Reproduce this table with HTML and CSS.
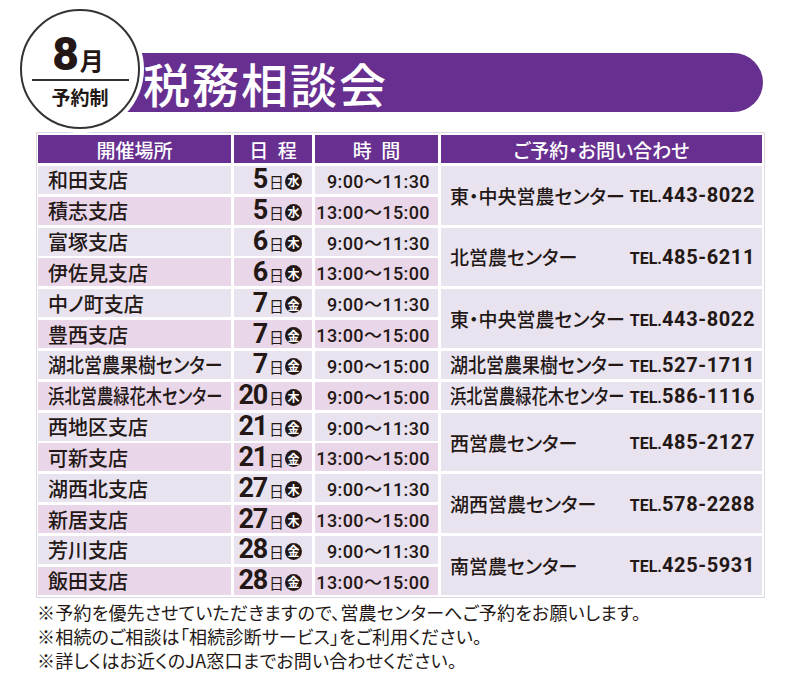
FILE: index.html
```html
<!DOCTYPE html>
<html lang="ja">
<head>
<meta charset="utf-8">
<title>税務相談会</title>
<link rel="stylesheet" href="styles.css">
</head>
<body>
<div class="page">
  <div class="title-row">
    <div class="title-bar"><h1>税務相談会</h1></div>
    <div class="badge">
      <div class="badge-month"><span class="num">8</span><span class="tsuki">月</span></div>
      <div class="badge-rule"></div>
      <div class="badge-sub">予約制</div>
    </div>
  </div>

  <div class="table-wrap">
    <div class="grid">
      <div class="th">開催場所</div>
      <div class="th">日&ensp;程</div>
      <div class="th">時&ensp;間</div>
      <div class="th">ご予約・お問い合わせ</div>

      <div class="c1 odd">和田支店</div>
      <div class="c2 odd"><span class="d">5</span><span class="nichi">日</span><span class="wd">水</span></div>
      <div class="c3 odd">9:00～11:30</div>
      <div class="c4 span2"><span class="cname">東・中央営農センター</span><span class="tel"><span class="tl">TEL.</span>443-8022</span></div>

      <div class="c1 even">積志支店</div>
      <div class="c2 even"><span class="d">5</span><span class="nichi">日</span><span class="wd">水</span></div>
      <div class="c3 even">13:00～15:00</div>

      <div class="c1 odd">富塚支店</div>
      <div class="c2 odd"><span class="d">6</span><span class="nichi">日</span><span class="wd">木</span></div>
      <div class="c3 odd">9:00～11:30</div>
      <div class="c4 span2"><span class="cname">北営農センター</span><span class="tel"><span class="tl">TEL.</span>485-6211</span></div>

      <div class="c1 even">伊佐見支店</div>
      <div class="c2 even"><span class="d">6</span><span class="nichi">日</span><span class="wd">木</span></div>
      <div class="c3 even">13:00～15:00</div>

      <div class="c1 odd">中ノ町支店</div>
      <div class="c2 odd"><span class="d">7</span><span class="nichi">日</span><span class="wd">金</span></div>
      <div class="c3 odd">9:00～11:30</div>
      <div class="c4 span2"><span class="cname">東・中央営農センター</span><span class="tel"><span class="tl">TEL.</span>443-8022</span></div>

      <div class="c1 even">豊西支店</div>
      <div class="c2 even"><span class="d">7</span><span class="nichi">日</span><span class="wd">金</span></div>
      <div class="c3 even">13:00～15:00</div>

      <div class="c1 odd"><span class="sq sq-10"><span class="sq-in sq-in-10">湖北営農果樹センター</span></span></div>
      <div class="c2 odd"><span class="d">7</span><span class="nichi">日</span><span class="wd">金</span></div>
      <div class="c3 odd">9:00～15:00</div>
      <div class="c4"><span class="cname sq sq-10"><span class="sq-in sq-in-10">湖北営農果樹センター</span></span><span class="tel"><span class="tl">TEL.</span>527-1711</span></div>

      <div class="c1 even"><span class="sq sq-11"><span class="sq-in sq-in-11">浜北営農緑花木センター</span></span></div>
      <div class="c2 even"><span class="d">20</span><span class="nichi">日</span><span class="wd">木</span></div>
      <div class="c3 even">9:00～15:00</div>
      <div class="c4"><span class="cname sq sq-11"><span class="sq-in sq-in-11">浜北営農緑花木センター</span></span><span class="tel"><span class="tl">TEL.</span>586-1116</span></div>

      <div class="c1 odd">西地区支店</div>
      <div class="c2 odd"><span class="d">21</span><span class="nichi">日</span><span class="wd">金</span></div>
      <div class="c3 odd">9:00～11:30</div>
      <div class="c4 span2"><span class="cname">西営農センター</span><span class="tel"><span class="tl">TEL.</span>485-2127</span></div>

      <div class="c1 even">可新支店</div>
      <div class="c2 even"><span class="d">21</span><span class="nichi">日</span><span class="wd">金</span></div>
      <div class="c3 even">13:00～15:00</div>

      <div class="c1 odd">湖西北支店</div>
      <div class="c2 odd"><span class="d">27</span><span class="nichi">日</span><span class="wd">木</span></div>
      <div class="c3 odd">9:00～11:30</div>
      <div class="c4 span2"><span class="cname">湖西営農センター</span><span class="tel"><span class="tl">TEL.</span>578-2288</span></div>

      <div class="c1 even">新居支店</div>
      <div class="c2 even"><span class="d">27</span><span class="nichi">日</span><span class="wd">木</span></div>
      <div class="c3 even">13:00～15:00</div>

      <div class="c1 odd">芳川支店</div>
      <div class="c2 odd"><span class="d">28</span><span class="nichi">日</span><span class="wd">金</span></div>
      <div class="c3 odd">9:00～11:30</div>
      <div class="c4 span2"><span class="cname">南営農センター</span><span class="tel"><span class="tl">TEL.</span>425-5931</span></div>

      <div class="c1 even">飯田支店</div>
      <div class="c2 even"><span class="d">28</span><span class="nichi">日</span><span class="wd">金</span></div>
      <div class="c3 even">13:00～15:00</div>
    </div>
  </div>

  <div class="notes">
    <p>※予約を優先させていただきますので、営農センターへご予約をお願いします。</p>
    <p>※相続のご相談は「相続診断サービス」をご利用ください。</p>
    <p>※詳しくはお近くのJA窓口までお問い合わせください。</p>
  </div>
</div>
</body>
</html>
```

FILE: styles.css
```css
* { box-sizing: border-box; }

body {
  margin: 0;
  background: #fff;
  color: #231815;
  font-family: "Noto Sans CJK JP", sans-serif;
  font-feature-settings: "palt";
}

.page {
  width: 800px;
  height: 694px;
  overflow: hidden;
}

/* ---------- title ---------- */
.title-row {
  position: relative;
  height: 132px;
  padding-top: 53px;
}

.title-bar {
  margin-left: 100px;
  width: 663px;
  height: 59px;
  background: #673090;
  border-radius: 0 30px 30px 0;
  display: flex;
  align-items: center;
  padding-left: 43px;
}

.title-bar h1 {
  margin: 0;
  color: #fff;
  font-size: 47px;
  font-weight: 500;
  line-height: 1;
  letter-spacing: 2px;
}

.badge {
  position: absolute;
  left: 20px;
  top: 9px;
  width: 120px;
  height: 120px;
  border: 2px solid #333;
  border-radius: 50%;
  background: #fff;
  box-shadow: 0 0 0 4px #fff;
  display: flex;
  flex-direction: column;
  align-items: center;
  padding-top: 21px;
}

.badge-month {
  display: flex;
  align-items: baseline;
  height: 45px;
  line-height: 45px;
  margin-left: -4px;
}

.badge-month .num {
  font-family: Roboto, sans-serif;
  font-weight: 900;
  font-size: 46px;
}

.badge-month .tsuki {
  font-size: 24px;
  font-weight: 700;
  margin-left: 1px;
}

.badge-rule {
  width: 97px;
  height: 2px;
  background: #333;
  margin-top: 2px;
}

.badge-sub {
  margin-top: 6px;
  font-size: 19px;
  font-weight: 700;
  line-height: 1;
}

/* ---------- table ---------- */
.table-wrap {
  margin-left: 36px;
  width: 729px;
  border: 1px solid #dcd8e0;
  padding: 2px 2px 2px 1px;
}

.grid {
  display: grid;
  grid-template-columns: 193px 78px 123px 321px;
  grid-auto-rows: 28px;
  column-gap: 3px;
  row-gap: 2.85px;
}

.th {
  background: #673090;
  color: #fff;
  font-size: 19px;
  font-weight: 500;
  display: flex;
  align-items: center;
  justify-content: center;
}

.odd { background: #e9e3f0; }
.even { background: #e9d6e8; }

.c1 {
  grid-column: 1;
  display: flex;
  align-items: center;
  padding-left: 10px;
  font-size: 20px;
  font-weight: 500;
  white-space: nowrap;
}

/* horizontally condensed long names */
.sq {
  display: inline-block;
  white-space: nowrap;
  font-size: 20px;
}
.sq-10 { width: 174px; }
.sq-11 { width: 175px; }

.sq-in {
  display: inline-block;
  transform-origin: left center;
}
.sq-in-10 { transform: scaleX(0.9); }
.sq-in-11 { transform: scaleX(0.815); }

.c2 {
  grid-column: 2;
  display: flex;
  align-items: center;
  justify-content: flex-end;
  padding-right: 10px;
}

.d {
  font-family: Roboto, sans-serif;
  font-weight: 700;
  font-size: 27px;
  letter-spacing: -1.2px;
  line-height: 1;
}

.nichi {
  font-size: 15px;
  margin: 4px 1px 0 2px;
  line-height: 1;
}

.wd {
  flex: none;
  width: 17px;
  height: 17px;
  border-radius: 50%;
  background: #231815;
  color: #fff;
  font-size: 12px;
  font-weight: 700;
  line-height: 1;
  display: inline-flex;
  align-items: center;
  justify-content: center;
  margin-top: 3px;
}

.c3 {
  grid-column: 3;
  display: flex;
  align-items: center;
  justify-content: flex-end;
  padding-right: 8px;
  font-family: Roboto, "Noto Sans CJK JP", sans-serif;
  font-weight: 500;
  font-size: 18px;
  letter-spacing: 0.4px;
  white-space: nowrap;
  font-feature-settings: normal;
}

.c4 {
  grid-column: 4;
  background: #e9e3f0;
  display: flex;
  align-items: center;
  justify-content: space-between;
  padding: 0 7px 0 9px;
  white-space: nowrap;
}

.span2 { grid-row: span 2; }

.cname {
  font-size: 19px;
  font-weight: 500;
}

.cname.sq { font-size: 20px; }

.tel {
  font-family: Roboto, sans-serif;
  font-weight: 700;
  font-size: 20px;
  letter-spacing: 0.6px;
}

.tel .tl {
  font-size: 16px;
  letter-spacing: 0;
}

/* ---------- notes ---------- */
.notes {
  padding: 2px 0 0 37px;
  font-size: 18px;
  line-height: 24px;
  letter-spacing: 0.2px;
}

.notes p {
  margin: 0;
}
```
